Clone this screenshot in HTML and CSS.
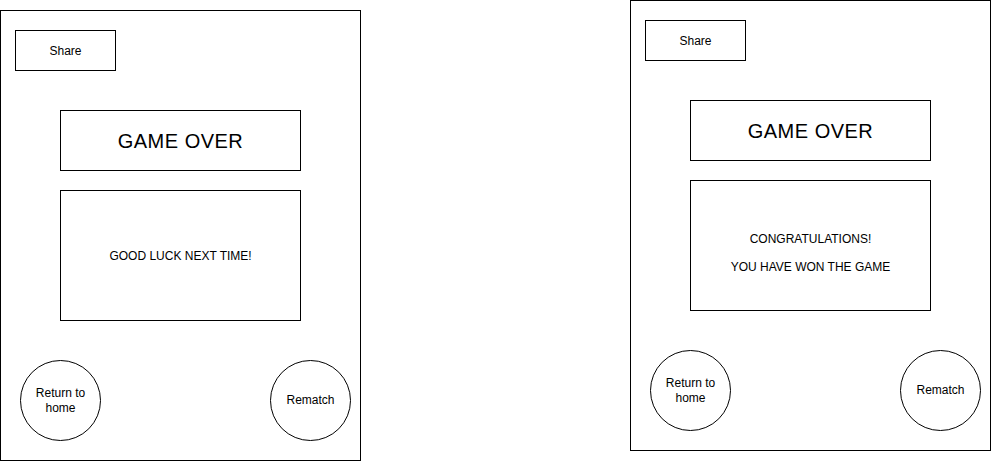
FILE: index.html
```html
<!DOCTYPE html>
<html lang="en">
<head>
<meta charset="utf-8">
<title>Game Over wireframes</title>
<link rel="stylesheet" href="styles.css">
</head>
<body>
<div class="canvas">
  <section class="screen screen-lost">
    <div class="share">Share</div>
    <div class="title">GAME OVER</div>
    <div class="message">
      <p>GOOD LUCK NEXT TIME!</p>
    </div>
    <div class="actions">
      <div class="circle"><span>Return to home</span></div>
      <div class="circle"><span>Rematch</span></div>
    </div>
  </section>
  <section class="screen screen-won">
    <div class="share">Share</div>
    <div class="title">GAME OVER</div>
    <div class="message message-offset">
      <p>CONGRATULATIONS!</p>
      <p>YOU HAVE WON THE GAME</p>
    </div>
    <div class="actions">
      <div class="circle"><span>Return to home</span></div>
      <div class="circle"><span>Rematch</span></div>
    </div>
  </section>
</div>
</body>
</html>
```

FILE: styles.css
```css
* {
  box-sizing: border-box;
}

html, body {
  margin: 0;
  padding: 0;
  background: #ffffff;
}

body {
  font-family: "Liberation Sans", Arial, Helvetica, sans-serif;
  color: #000000;
  font-size: 12px;
  width: 992px;
  height: 461px;
  overflow: hidden;
}

.canvas {
  display: flex;
  align-items: flex-start;
  gap: 269px;
}

.screen {
  width: 361px;
  height: 451px;
  border: 1px solid #000;
  padding: 19px 9px 0 14px;
  display: flex;
  flex-direction: column;
}

.screen-lost {
  margin-top: 10px;
}

.share {
  width: 101px;
  height: 41px;
  border: 1px solid #000;
  display: flex;
  align-items: center;
  justify-content: center;
  font-size: 12px;
}

.title {
  width: 241px;
  height: 61px;
  margin-top: 39px;
  margin-left: 45px;
  border: 1px solid #000;
  display: flex;
  align-items: center;
  justify-content: center;
  font-size: 20px;
  letter-spacing: 0.5px;
  padding-top: 1px;
}

.message {
  width: 241px;
  height: 131px;
  margin-top: 19px;
  margin-left: 45px;
  border: 1px solid #000;
  display: flex;
  flex-direction: column;
  align-items: center;
  justify-content: center;
  gap: 14px;
  font-size: 12px;
  line-height: 14px;
}

.message p {
  margin: 0;
}

.message-offset {
  padding-top: 14px;
}

.actions {
  margin-top: 39px;
  margin-left: 5px;
  display: flex;
  justify-content: space-between;
}

.circle {
  width: 81px;
  height: 81px;
  border: 1px solid #000;
  border-radius: 50%;
  display: flex;
  align-items: center;
  justify-content: center;
  text-align: center;
  font-size: 12px;
  line-height: 14.5px;
}

.circle span {
  max-width: 60px;
}
```
